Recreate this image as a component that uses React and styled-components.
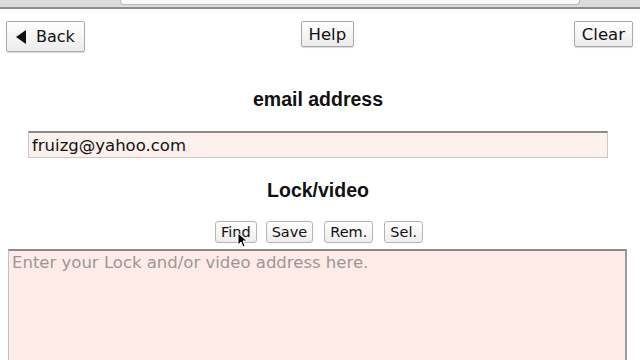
import React, { useState } from 'react'
import styled, { createGlobalStyle } from 'styled-components'

const GlobalStyle = createGlobalStyle`
  html, body {
    margin: 0;
    padding: 0;
    background: #ffffff;
    overflow: hidden;
  }
  body {
    font-family: "DejaVu Sans", "Liberation Sans", sans-serif;
  }
`

const Page = styled.div`
  width: 640px;
  height: 360px;
  position: relative;
  overflow: hidden;
  background: #fff;
`

const Chrome = styled.div`
  height: 7px;
  background: #dcdcdc;
  border-bottom: 2px solid #8e8e8e;
  display: flex;
  padding: 0 60px 0 120px;
`

const AddressBar = styled.div`
  flex: 1;
  height: 4px;
  background: #fafafa;
  border: 1px solid #b8b8b8;
  border-top: none;
  border-radius: 0 0 4px 4px;
`

const Toolbar = styled.div`
  display: flex;
  justify-content: space-between;
  align-items: flex-start;
  padding: 12px 7px 0 6px;
`

const NavButton = styled.button`
  font-family: "DejaVu Sans", sans-serif;
  font-size: ${p => p.$big ? '16px' : '16.5px'};
  color: #111;
  background: linear-gradient(#ffffff, #ececec);
  border: 1px solid #a9a9a9;
  border-radius: 2px;
  height: ${p => p.$big ? '31px' : '26px'};
  padding: 0 ${p => p.$big ? '9px' : '7px'};
  margin-left: ${p => p.$shift || 0}px;
  display: flex;
  align-items: center;
  gap: 9px;
  box-shadow: 0 1px 1px rgba(0, 0, 0, 0.15);
  cursor: default;
`

const Heading = styled.h2`
  margin: 0;
  font-family: "Liberation Sans", Arial, sans-serif;
  font-weight: bold;
  font-size: 19.5px;
  color: #111;
  text-align: center;
  padding-right: 4px;
`

const EmailSection = styled.div`
  padding-top: 36px;
  display: flex;
  flex-direction: column;
  align-items: center;
`

const EmailInput = styled.input`
  margin-top: 20px;
  width: 580px;
  height: 27px;
  box-sizing: border-box;
  margin-left: -4px;
  background: #fdf1ed;
  border: 1px solid #c8c8c8;
  border-top: 2px solid #8a8a8a;
  font-family: "DejaVu Sans", sans-serif;
  font-size: 16.5px;
  color: #111;
  padding: 0 3px;
  outline: none;
`

const LockSection = styled.div`
  padding-top: 21px;
  display: flex;
  flex-direction: column;
  align-items: center;
`

const ActionRow = styled.div`
  display: flex;
  gap: 9px;
  margin-top: 19px;
  margin-left: -2px;
  position: relative;
`

const SmallButton = styled.button`
  font-family: "DejaVu Sans", sans-serif;
  font-size: 14.5px;
  color: #111;
  background: linear-gradient(#ffffff, #ededed);
  border: 1px solid #b4b4b4;
  border-radius: 3px;
  height: 22px;
  padding: 0 5px;
  margin-right: ${p => p.$extra ? '2px' : '0'};
  cursor: default;
`

const VideoArea = styled.textarea`
  display: block;
  margin: 6px 0 0 8px;
  width: 619px;
  height: 130px;
  box-sizing: border-box;
  background: #fdebe7;
  border: 1px solid #c0c0c0;
  border-top: 2px solid #8a8a8a;
  border-right: 2px solid #9a9a9a;
  font-family: "DejaVu Sans", sans-serif;
  font-size: 16.5px;
  color: #333;
  padding: 2px 3px;
  resize: none;
  outline: none;
  &::placeholder {
    color: #9c9796;
  }
`

const Cursor = styled.svg`
  position: absolute;
  left: 22px;
  top: 11px;
  pointer-events: none;
`

const BackArrow = () => (
  <svg width="11" height="14" viewBox="0 0 11 14">
    <path d="M10 0 L10 14 L0 7 Z" fill="#111" />
  </svg>
)

const App = () => {
  const [email, setEmail] = useState('fruizg@yahoo.com')
  const [video, setVideo] = useState('')

  return (
    <Page>
      <GlobalStyle />
      <Chrome>
        <AddressBar />
      </Chrome>
      <Toolbar>
        <NavButton $big>
          <BackArrow />
          Back
        </NavButton>
        <NavButton $shift={-4}>Help</NavButton>
        <NavButton>Clear</NavButton>
      </Toolbar>
      <EmailSection>
        <Heading>email address</Heading>
        <EmailInput value={email} onChange={e => setEmail(e.target.value)} />
      </EmailSection>
      <LockSection>
        <Heading>Lock/video</Heading>
        <ActionRow>
          <SmallButton>Find</SmallButton>
          <SmallButton $extra>Save</SmallButton>
          <SmallButton $extra>Rem.</SmallButton>
          <SmallButton>Sel.</SmallButton>
          <Cursor width="10" height="16" viewBox="0 0 10 16">
            <path d="M1 1 L1 13 L4 10 L6 15 L8 14 L6 9 L10 9 Z" fill="#000" stroke="#fff" strokeWidth="1" />
          </Cursor>
        </ActionRow>
      </LockSection>
      <VideoArea
        placeholder="Enter your Lock and/or video address here."
        value={video}
        onChange={e => setVideo(e.target.value)}
      />
    </Page>
  )
}

export default App
